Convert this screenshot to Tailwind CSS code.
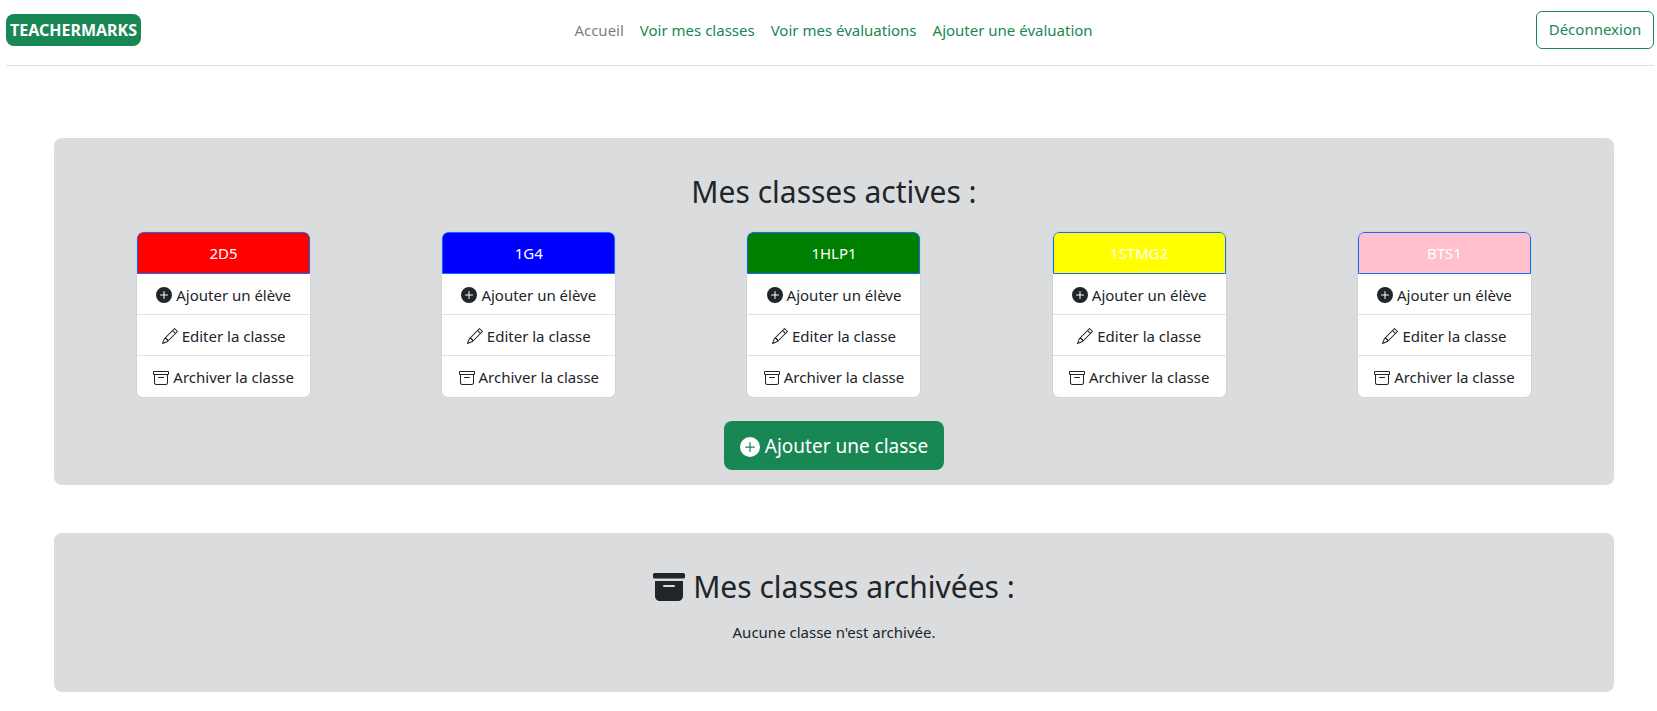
<!DOCTYPE html>
<html lang="fr">
<head>
    <meta charset="UTF-8">
    <title>TeacherMarks</title>
    <script src="https://cdn.jsdelivr.net/npm/@tailwindcss/browser@4"></script>
</head>
<body class="bg-white text-[#212529] font-['Noto_Sans',sans-serif] text-[15px] overflow-hidden">
    <!-- Navbar -->
    <nav class="ml-[6px] mr-[3px] h-[66px] border-b border-[#dee2e6] flex items-center justify-between pb-[6px]">
        <a class="bg-[#198754] text-white font-bold text-[16px] rounded-lg h-[32px] w-[135px] flex items-center justify-center">TEACHERMARKS</a>
        <div class="flex gap-4 ml-[-10px] mt-[2px]">
            <a class="text-black/55">Accueil</a>
            <a class="text-[#198754]">Voir mes classes</a>
            <a class="text-[#198754]">Voir mes évaluations</a>
            <a class="text-[#198754]">Ajouter une évaluation</a>
        </div>
        <button class="border border-[#198754] text-[#198754] rounded-md h-[38px] w-[118px]">Déconnexion</button>
    </nav>

    <main class="ml-[54px] mr-[43px] pt-[72px]">
        <!-- Classes actives -->
        <section class="bg-[#dadcde] rounded-lg h-[347px] px-[17px] pt-[32px]">
            <h2 class="text-[30px] leading-[44px] text-center">Mes classes actives :</h2>
            <div class="grid grid-cols-5 mt-[18px]">
                <div class="w-[173px] mx-auto rounded-md overflow-hidden bg-white shadow-[0_0_0_1px_rgba(0,0,0,0.04)] text-center">
                    <div class="h-[42px] bg-[#ff0000] text-white border border-[#0d6efd] rounded-t-md flex items-center justify-center">2D5</div>
                    <div class="h-[41px] pt-[2px] border-b border-[#dee2e6] flex items-center justify-center gap-1">
                        <svg class="w-4 h-4" viewBox="0 0 16 16" fill="currentColor"><path d="M16 8A8 8 0 1 1 0 8a8 8 0 0 1 16 0M8.5 4.5a.5.5 0 0 0-1 0v3h-3a.5.5 0 0 0 0 1h3v3a.5.5 0 0 0 1 0v-3h3a.5.5 0 0 0 0-1h-3z"/></svg>
                        <span>Ajouter un élève</span>
                    </div>
                    <div class="h-[41px] pt-[2px] border-b border-[#dee2e6] flex items-center justify-center gap-1">
                        <svg class="w-4 h-4" viewBox="0 0 16 16" fill="currentColor"><path d="M12.146.146a.5.5 0 0 1 .708 0l3 3a.5.5 0 0 1 0 .708l-10 10a.5.5 0 0 1-.168.11l-5 2a.5.5 0 0 1-.65-.65l2-5a.5.5 0 0 1 .11-.168zM11.207 2.5 13.5 4.793 14.793 3.5 12.5 1.207zm1.586 3L10.5 3.207 4 9.707V10h.5a.5.5 0 0 1 .5.5v.5h.5a.5.5 0 0 1 .5.5v.5h.293zm-9.761 5.175-.106.106-1.528 3.821 3.821-1.528.106-.106A.5.5 0 0 1 5 12.5V12h-.5a.5.5 0 0 1-.5-.5V11h-.5a.5.5 0 0 1-.468-.325"/></svg>
                        <span>Editer la classe</span>
                    </div>
                    <div class="h-[41px] pt-[2px] flex items-center justify-center gap-1">
                        <svg class="w-4 h-4" viewBox="0 0 16 16" fill="currentColor"><path d="M0 2a1 1 0 0 1 1-1h14a1 1 0 0 1 1 1v2a1 1 0 0 1-1 1v7.5a2.5 2.5 0 0 1-2.5 2.5h-9A2.5 2.5 0 0 1 1 12.5V5a1 1 0 0 1-1-1zm2 3v7.5A1.5 1.5 0 0 0 3.5 14h9a1.5 1.5 0 0 0 1.5-1.5V5zm13-3H1v2h14zM5 7.5a.5.5 0 0 1 .5-.5h5a.5.5 0 0 1 0 1h-5a.5.5 0 0 1-.5-.5"/></svg>
                        <span>Archiver la classe</span>
                    </div>
                </div>
                <div class="w-[173px] mx-auto rounded-md overflow-hidden bg-white shadow-[0_0_0_1px_rgba(0,0,0,0.04)] text-center">
                    <div class="h-[42px] bg-[#0000ff] text-white border border-[#0d6efd] rounded-t-md flex items-center justify-center">1G4</div>
                    <div class="h-[41px] pt-[2px] border-b border-[#dee2e6] flex items-center justify-center gap-1">
                        <svg class="w-4 h-4" viewBox="0 0 16 16" fill="currentColor"><path d="M16 8A8 8 0 1 1 0 8a8 8 0 0 1 16 0M8.5 4.5a.5.5 0 0 0-1 0v3h-3a.5.5 0 0 0 0 1h3v3a.5.5 0 0 0 1 0v-3h3a.5.5 0 0 0 0-1h-3z"/></svg>
                        <span>Ajouter un élève</span>
                    </div>
                    <div class="h-[41px] pt-[2px] border-b border-[#dee2e6] flex items-center justify-center gap-1">
                        <svg class="w-4 h-4" viewBox="0 0 16 16" fill="currentColor"><path d="M12.146.146a.5.5 0 0 1 .708 0l3 3a.5.5 0 0 1 0 .708l-10 10a.5.5 0 0 1-.168.11l-5 2a.5.5 0 0 1-.65-.65l2-5a.5.5 0 0 1 .11-.168zM11.207 2.5 13.5 4.793 14.793 3.5 12.5 1.207zm1.586 3L10.5 3.207 4 9.707V10h.5a.5.5 0 0 1 .5.5v.5h.5a.5.5 0 0 1 .5.5v.5h.293zm-9.761 5.175-.106.106-1.528 3.821 3.821-1.528.106-.106A.5.5 0 0 1 5 12.5V12h-.5a.5.5 0 0 1-.5-.5V11h-.5a.5.5 0 0 1-.468-.325"/></svg>
                        <span>Editer la classe</span>
                    </div>
                    <div class="h-[41px] pt-[2px] flex items-center justify-center gap-1">
                        <svg class="w-4 h-4" viewBox="0 0 16 16" fill="currentColor"><path d="M0 2a1 1 0 0 1 1-1h14a1 1 0 0 1 1 1v2a1 1 0 0 1-1 1v7.5a2.5 2.5 0 0 1-2.5 2.5h-9A2.5 2.5 0 0 1 1 12.5V5a1 1 0 0 1-1-1zm2 3v7.5A1.5 1.5 0 0 0 3.5 14h9a1.5 1.5 0 0 0 1.5-1.5V5zm13-3H1v2h14zM5 7.5a.5.5 0 0 1 .5-.5h5a.5.5 0 0 1 0 1h-5a.5.5 0 0 1-.5-.5"/></svg>
                        <span>Archiver la classe</span>
                    </div>
                </div>
                <div class="w-[173px] mx-auto rounded-md overflow-hidden bg-white shadow-[0_0_0_1px_rgba(0,0,0,0.04)] text-center">
                    <div class="h-[42px] bg-[#008000] text-white border border-[#0d6efd] rounded-t-md flex items-center justify-center">1HLP1</div>
                    <div class="h-[41px] pt-[2px] border-b border-[#dee2e6] flex items-center justify-center gap-1">
                        <svg class="w-4 h-4" viewBox="0 0 16 16" fill="currentColor"><path d="M16 8A8 8 0 1 1 0 8a8 8 0 0 1 16 0M8.5 4.5a.5.5 0 0 0-1 0v3h-3a.5.5 0 0 0 0 1h3v3a.5.5 0 0 0 1 0v-3h3a.5.5 0 0 0 0-1h-3z"/></svg>
                        <span>Ajouter un élève</span>
                    </div>
                    <div class="h-[41px] pt-[2px] border-b border-[#dee2e6] flex items-center justify-center gap-1">
                        <svg class="w-4 h-4" viewBox="0 0 16 16" fill="currentColor"><path d="M12.146.146a.5.5 0 0 1 .708 0l3 3a.5.5 0 0 1 0 .708l-10 10a.5.5 0 0 1-.168.11l-5 2a.5.5 0 0 1-.65-.65l2-5a.5.5 0 0 1 .11-.168zM11.207 2.5 13.5 4.793 14.793 3.5 12.5 1.207zm1.586 3L10.5 3.207 4 9.707V10h.5a.5.5 0 0 1 .5.5v.5h.5a.5.5 0 0 1 .5.5v.5h.293zm-9.761 5.175-.106.106-1.528 3.821 3.821-1.528.106-.106A.5.5 0 0 1 5 12.5V12h-.5a.5.5 0 0 1-.5-.5V11h-.5a.5.5 0 0 1-.468-.325"/></svg>
                        <span>Editer la classe</span>
                    </div>
                    <div class="h-[41px] pt-[2px] flex items-center justify-center gap-1">
                        <svg class="w-4 h-4" viewBox="0 0 16 16" fill="currentColor"><path d="M0 2a1 1 0 0 1 1-1h14a1 1 0 0 1 1 1v2a1 1 0 0 1-1 1v7.5a2.5 2.5 0 0 1-2.5 2.5h-9A2.5 2.5 0 0 1 1 12.5V5a1 1 0 0 1-1-1zm2 3v7.5A1.5 1.5 0 0 0 3.5 14h9a1.5 1.5 0 0 0 1.5-1.5V5zm13-3H1v2h14zM5 7.5a.5.5 0 0 1 .5-.5h5a.5.5 0 0 1 0 1h-5a.5.5 0 0 1-.5-.5"/></svg>
                        <span>Archiver la classe</span>
                    </div>
                </div>
                <div class="w-[173px] mx-auto rounded-md overflow-hidden bg-white shadow-[0_0_0_1px_rgba(0,0,0,0.04)] text-center">
                    <div class="h-[42px] bg-[#ffff00] text-white border border-[#0d6efd] rounded-t-md flex items-center justify-center">1STMG2</div>
                    <div class="h-[41px] pt-[2px] border-b border-[#dee2e6] flex items-center justify-center gap-1">
                        <svg class="w-4 h-4" viewBox="0 0 16 16" fill="currentColor"><path d="M16 8A8 8 0 1 1 0 8a8 8 0 0 1 16 0M8.5 4.5a.5.5 0 0 0-1 0v3h-3a.5.5 0 0 0 0 1h3v3a.5.5 0 0 0 1 0v-3h3a.5.5 0 0 0 0-1h-3z"/></svg>
                        <span>Ajouter un élève</span>
                    </div>
                    <div class="h-[41px] pt-[2px] border-b border-[#dee2e6] flex items-center justify-center gap-1">
                        <svg class="w-4 h-4" viewBox="0 0 16 16" fill="currentColor"><path d="M12.146.146a.5.5 0 0 1 .708 0l3 3a.5.5 0 0 1 0 .708l-10 10a.5.5 0 0 1-.168.11l-5 2a.5.5 0 0 1-.65-.65l2-5a.5.5 0 0 1 .11-.168zM11.207 2.5 13.5 4.793 14.793 3.5 12.5 1.207zm1.586 3L10.5 3.207 4 9.707V10h.5a.5.5 0 0 1 .5.5v.5h.5a.5.5 0 0 1 .5.5v.5h.293zm-9.761 5.175-.106.106-1.528 3.821 3.821-1.528.106-.106A.5.5 0 0 1 5 12.5V12h-.5a.5.5 0 0 1-.5-.5V11h-.5a.5.5 0 0 1-.468-.325"/></svg>
                        <span>Editer la classe</span>
                    </div>
                    <div class="h-[41px] pt-[2px] flex items-center justify-center gap-1">
                        <svg class="w-4 h-4" viewBox="0 0 16 16" fill="currentColor"><path d="M0 2a1 1 0 0 1 1-1h14a1 1 0 0 1 1 1v2a1 1 0 0 1-1 1v7.5a2.5 2.5 0 0 1-2.5 2.5h-9A2.5 2.5 0 0 1 1 12.5V5a1 1 0 0 1-1-1zm2 3v7.5A1.5 1.5 0 0 0 3.5 14h9a1.5 1.5 0 0 0 1.5-1.5V5zm13-3H1v2h14zM5 7.5a.5.5 0 0 1 .5-.5h5a.5.5 0 0 1 0 1h-5a.5.5 0 0 1-.5-.5"/></svg>
                        <span>Archiver la classe</span>
                    </div>
                </div>
                <div class="w-[173px] mx-auto rounded-md overflow-hidden bg-white shadow-[0_0_0_1px_rgba(0,0,0,0.04)] text-center">
                    <div class="h-[42px] bg-[#ffc0cb] text-white border border-[#0d6efd] rounded-t-md flex items-center justify-center">BTS1</div>
                    <div class="h-[41px] pt-[2px] border-b border-[#dee2e6] flex items-center justify-center gap-1">
                        <svg class="w-4 h-4" viewBox="0 0 16 16" fill="currentColor"><path d="M16 8A8 8 0 1 1 0 8a8 8 0 0 1 16 0M8.5 4.5a.5.5 0 0 0-1 0v3h-3a.5.5 0 0 0 0 1h3v3a.5.5 0 0 0 1 0v-3h3a.5.5 0 0 0 0-1h-3z"/></svg>
                        <span>Ajouter un élève</span>
                    </div>
                    <div class="h-[41px] pt-[2px] border-b border-[#dee2e6] flex items-center justify-center gap-1">
                        <svg class="w-4 h-4" viewBox="0 0 16 16" fill="currentColor"><path d="M12.146.146a.5.5 0 0 1 .708 0l3 3a.5.5 0 0 1 0 .708l-10 10a.5.5 0 0 1-.168.11l-5 2a.5.5 0 0 1-.65-.65l2-5a.5.5 0 0 1 .11-.168zM11.207 2.5 13.5 4.793 14.793 3.5 12.5 1.207zm1.586 3L10.5 3.207 4 9.707V10h.5a.5.5 0 0 1 .5.5v.5h.5a.5.5 0 0 1 .5.5v.5h.293zm-9.761 5.175-.106.106-1.528 3.821 3.821-1.528.106-.106A.5.5 0 0 1 5 12.5V12h-.5a.5.5 0 0 1-.5-.5V11h-.5a.5.5 0 0 1-.468-.325"/></svg>
                        <span>Editer la classe</span>
                    </div>
                    <div class="h-[41px] pt-[2px] flex items-center justify-center gap-1">
                        <svg class="w-4 h-4" viewBox="0 0 16 16" fill="currentColor"><path d="M0 2a1 1 0 0 1 1-1h14a1 1 0 0 1 1 1v2a1 1 0 0 1-1 1v7.5a2.5 2.5 0 0 1-2.5 2.5h-9A2.5 2.5 0 0 1 1 12.5V5a1 1 0 0 1-1-1zm2 3v7.5A1.5 1.5 0 0 0 3.5 14h9a1.5 1.5 0 0 0 1.5-1.5V5zm13-3H1v2h14zM5 7.5a.5.5 0 0 1 .5-.5h5a.5.5 0 0 1 0 1h-5a.5.5 0 0 1-.5-.5"/></svg>
                        <span>Archiver la classe</span>
                    </div>
                </div>
            </div>
            <div class="flex justify-center mt-[24px]">
                <button class="bg-[#198754] text-white rounded-lg w-[220px] h-[49px] pt-[2px] text-[19px] flex items-center justify-center gap-[5px]">
                    <svg class="w-5 h-5" viewBox="0 0 16 16" fill="currentColor"><path d="M16 8A8 8 0 1 1 0 8a8 8 0 0 1 16 0M8.5 4.5a.5.5 0 0 0-1 0v3h-3a.5.5 0 0 0 0 1h3v3a.5.5 0 0 0 1 0v-3h3a.5.5 0 0 0 0-1h-3z"/></svg>
                    Ajouter une classe
                </button>
            </div>
        </section>

        <!-- Classes archivees -->
        <section class="bg-[#dadcde] rounded-lg h-[159px] mt-[48px] pt-[32px] text-center">
            <h2 class="text-[30px] leading-[44px] flex items-center justify-center gap-2">
                <svg class="w-8 h-8" viewBox="0 0 16 16" fill="currentColor"><path d="M12.643 15C13.979 15 15 13.845 15 12.5V5H1v7.5C1 13.845 2.021 15 3.357 15zM5.5 7h5a.5.5 0 0 1 0 1h-5a.5.5 0 0 1 0-1M.8 1a.8.8 0 0 0-.8.8V3a.8.8 0 0 0 .8.8h14.4A.8.8 0 0 0 16 3V1.8a.8.8 0 0 0-.8-.8z"/></svg>
                Mes classes archivées :
            </h2>
            <p class="mt-[12px]">Aucune classe n'est archivée.</p>
        </section>
    </main>
</body>
</html>
